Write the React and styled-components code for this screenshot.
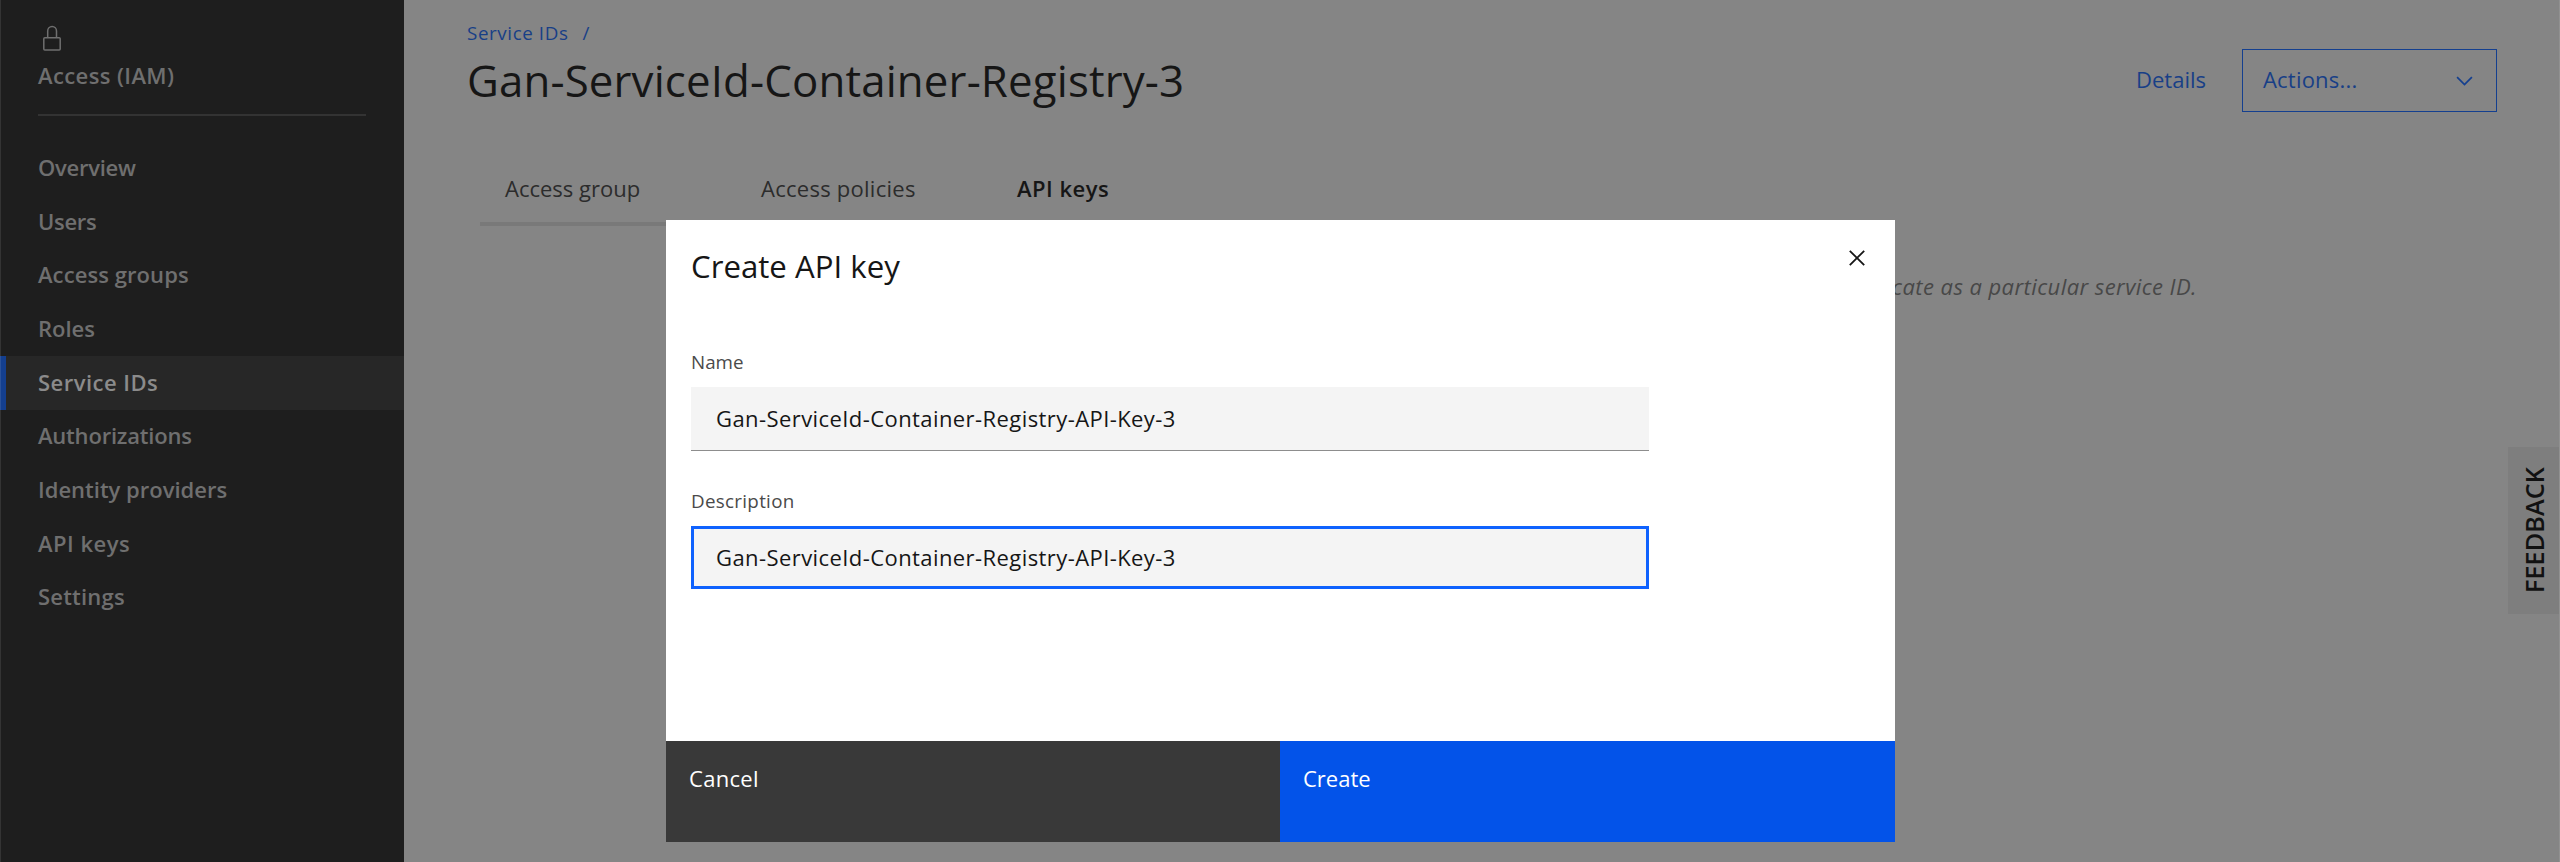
import React from "react";
import styled, { createGlobalStyle } from "styled-components";

const GlobalStyle = createGlobalStyle`
  * { box-sizing: border-box; }
  body {
    margin: 0;
    background: #858585;
    font-family: "Open Sans", "Noto Sans", sans-serif;
    font-size: 22px;
    overflow: hidden;
  }
`;

const Page = styled.div`
  position: relative;
  display: flex;
  width: 2560px;
  height: 862px;
  overflow: hidden;
  background: #858585;
`;

const Sidebar = styled.aside`
  flex: none;
  width: 404px;
  background: #1e1e1e;
  color: #6f6f6f;
  font-weight: 600;
`;

const SidebarHeader = styled.header`
  display: flex;
  flex-direction: column;
  margin: 0 38px;
  padding-top: 25px;
  height: 116px;
  border-bottom: 2px solid #333333;

  svg { display: block; margin-left: 4px; }
`;

const SidebarTitle = styled.div`
  margin-top: 8px;
  line-height: 30px;
  letter-spacing: 0.39px;
`;

const Nav = styled.nav`
  padding-top: 25.33px;
`;

const NavItem = styled.a`
  display: flex;
  align-items: center;
  height: 53.67px;
  padding: 0 0 2px 32px;
  border-left: 6px solid ${(p) => (p.$active ? "#143f8f" : "transparent")};
  background: ${(p) => (p.$active ? "#272727" : "transparent")};
  color: ${(p) => (p.$active ? "#8b8b8b" : "#6f6f6f")};
  letter-spacing: ${(p) => p.$track}px;
  white-space: nowrap;
`;

const Main = styled.main`
  flex: 1;
  min-width: 0;
`;

const PageHeader = styled.header`
  display: flex;
  justify-content: space-between;
  padding: 19px 63px 0 63px;
  height: 161px;
`;

const Breadcrumb = styled.div`
  display: flex;
  gap: 14px;
  font-size: 18.8px;
  line-height: 28px;
  letter-spacing: 0.6px;
  color: #183f87;
`;

const Title = styled.h1`
  margin: 3px 0 0;
  font-size: 43.8px;
  line-height: 60px;
  font-weight: 400;
  letter-spacing: 0.14px;
  color: #161616;
`;

const HeaderActions = styled.div`
  display: flex;
  align-items: center;
  gap: 36px;
  height: 63px;
  margin-top: 30px;
  color: #183f87;
`;

const DetailsLink = styled.a`
  padding-bottom: 3px;
`;

const ActionsButton = styled.div`
  display: flex;
  align-items: center;
  justify-content: space-between;
  width: 255px;
  height: 63px;
  padding: 0 23px 3px 20px;
  border: 1px solid #143f8f;
  letter-spacing: 0.2px;

  svg { display: block; margin-top: 3px; }
`;

const Tabs = styled.div`
  display: flex;
  margin-left: 76px;
`;

const Tab = styled.div`
  flex: none;
  width: 251px;
  height: 65px;
  margin-right: 5px;
  padding: 12px 0 0 25px;
  line-height: 31px;
  border-bottom: 4px solid #797979;
  color: ${(p) => (p.$active ? "#161616" : "#2c2c2c")};
  font-weight: ${(p) => (p.$active ? 600 : 400)};
  letter-spacing: ${(p) => p.$track}px;
`;

const Hint = styled.p`
  margin: 45px 363px 0 0;
  line-height: 30px;
  text-align: right;
  font-style: italic;
  letter-spacing: 0.42px;
  color: #484848;
`;

const FeedbackTab = styled.div`
  position: absolute;
  top: 447px;
  right: 1px;
  display: flex;
  align-items: center;
  justify-content: center;
  width: 51px;
  height: 167px;
  padding-left: 1px;
  background: #7e7e7e;
  color: #111111;

  span {
    writing-mode: vertical-rl;
    transform: rotate(180deg);
    font-size: 25.2px;
    line-height: 34px;
    font-weight: 600;
    letter-spacing: 0.1px;
  }
`;

const Overlay = styled.div`
  position: absolute;
  inset: 0;
  display: flex;
  align-items: flex-start;
  padding: 220px 0 0 666px;
  border: solid rgba(255, 255, 255, 0.1);
  border-width: 0 1px;
`;

const Modal = styled.section`
  display: flex;
  flex-direction: column;
  margin-left: -1px;
  width: 1229px;
  height: 622px;
  background: #ffffff;
  color: #161616;
`;

const ModalHeader = styled.header`
  display: flex;
  justify-content: space-between;
  padding: 24px 29px 0 25px;
  height: 125px;

  svg { display: block; margin-top: 5px; }
`;

const ModalTitle = styled.h2`
  margin: 0;
  font-size: 31.2px;
  line-height: 44px;
  font-weight: 400;
`;

const ModalBody = styled.div`
  flex: 1;
  display: flex;
  flex-direction: column;
  gap: 33px;
  padding-left: 25px;
`;

const Field = styled.div`
  width: 958px;
  height: 106px;
`;

const Label = styled.div`
  height: 42px;
  padding-top: 4px;
  font-size: 18.8px;
  line-height: 26px;
  letter-spacing: ${(p) => p.$track}px;
  color: #4a4a4a;
`;

const Input = styled.div`
  display: flex;
  align-items: center;
  height: ${(p) => (p.$focused ? 63 : 64)}px;
  padding: 0 ${(p) => (p.$focused ? 22 : 25)}px;
  padding-bottom: 2px;
  background: #f4f4f4;
  border: ${(p) => (p.$focused ? "3px solid #0f62fe" : "0 solid #8d8d8d")};
  border-bottom-width: ${(p) => (p.$focused ? 3 : 1)}px;
  letter-spacing: 0.42px;
`;

const ModalFooter = styled.footer`
  display: flex;
  height: 101px;
`;

const FooterButton = styled.div`
  flex: none;
  width: ${(p) => (p.$primary ? 615 : 614)}px;
  padding: 22px 23px;
  line-height: 31px;
  color: #ffffff;
  background: ${(p) => (p.$primary ? "#0353e9" : "#393939")};
  letter-spacing: ${(p) => (p.$primary ? 0 : 0.3)}px;
`;

const LockIcon = () => (
  <svg width="20" height="27" viewBox="0 0 20 27" fill="none" stroke="#6f6f6f" strokeWidth="1.5">
    <rect x="1.8" y="12.7" width="16.4" height="12.3" rx="1" />
    <path d="M5.7 12.7V6a4.4 4.4 0 0 1 8.8 0v6.7" />
  </svg>
);

const ChevronIcon = () => (
  <svg width="17" height="10" viewBox="0 0 17 10" fill="none" stroke="#143f8f" strokeWidth="1.7">
    <path d="M1.1 1.2 8.5 8.6l7.4-7.4" />
  </svg>
);

const CloseIcon = () => (
  <svg width="18" height="18" viewBox="0 0 18 18" fill="none" stroke="#161616" strokeWidth="1.8">
    <path d="M1.8 1.8l14.4 14.4M16.2 1.8L1.8 16.2" />
  </svg>
);

const NAV = [
  { label: "Overview", track: -0.26 },
  { label: "Users", track: -0.3 },
  { label: "Access groups", track: 0.08 },
  { label: "Roles", track: 0 },
  { label: "Service IDs", track: 0.47, active: true },
  { label: "Authorizations", track: -0.2 },
  { label: "Identity providers", track: 0 },
  { label: "API keys", track: 0.5 },
  { label: "Settings", track: 0.2 },
];

const TABS = [
  { label: "Access group", track: 0 },
  { label: "Access policies", track: 0.26 },
  { label: "API keys", track: 0.5, active: true },
];

export default function App() {
  return (
    <>
      <GlobalStyle />
      <Page>
        <Sidebar>
          <SidebarHeader>
            <LockIcon />
            <SidebarTitle>Access (IAM)</SidebarTitle>
          </SidebarHeader>
          <Nav>
            {NAV.map((n) => (
              <NavItem key={n.label} $active={n.active} $track={n.track}>{n.label}</NavItem>
            ))}
          </Nav>
        </Sidebar>
        <Main>
          <PageHeader>
            <div>
              <Breadcrumb>
                <span>Service IDs</span>
                <span>/</span>
              </Breadcrumb>
              <Title>Gan-ServiceId-Container-Registry-3</Title>
            </div>
            <HeaderActions>
              <DetailsLink>Details</DetailsLink>
              <ActionsButton>
                Actions...
                <ChevronIcon />
              </ActionsButton>
            </HeaderActions>
          </PageHeader>
          <Tabs>
            {TABS.map((t) => (
              <Tab key={t.label} $active={t.active} $track={t.track}>{t.label}</Tab>
            ))}
          </Tabs>
          <Hint>authenticate as a particular service ID.</Hint>
        </Main>
        <FeedbackTab><span>FEEDBACK</span></FeedbackTab>
        <Overlay>
          <Modal>
            <ModalHeader>
              <ModalTitle>Create API key</ModalTitle>
              <CloseIcon />
            </ModalHeader>
            <ModalBody>
              <Field>
                <Label $track={0}>Name</Label>
                <Input>Gan-ServiceId-Container-Registry-API-Key-3</Input>
              </Field>
              <Field>
                <Label $track={0.3}>Description</Label>
                <Input $focused>Gan-ServiceId-Container-Registry-API-Key-3</Input>
              </Field>
            </ModalBody>
            <ModalFooter>
              <FooterButton>Cancel</FooterButton>
              <FooterButton $primary>Create</FooterButton>
            </ModalFooter>
          </Modal>
        </Overlay>
      </Page>
    </>
  );
}
